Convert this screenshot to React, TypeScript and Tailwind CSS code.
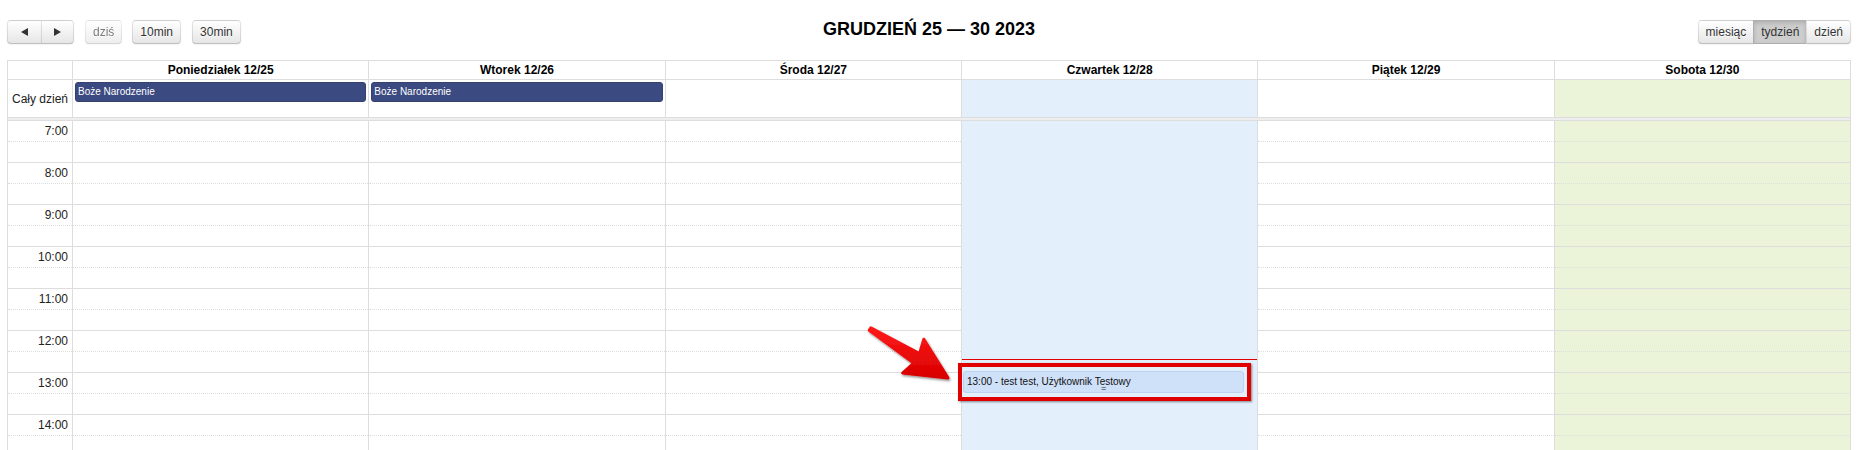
import React from "react";

type Day = { label: string; allDay?: string; today?: boolean; weekend?: boolean };

const DAYS: Day[] = [
  { label: "Poniedziałek 12/25", allDay: "Boże Narodzenie" },
  { label: "Wtorek 12/26", allDay: "Boże Narodzenie" },
  { label: "Środa 12/27" },
  { label: "Czwartek 12/28", today: true },
  { label: "Piątek 12/29" },
  { label: "Sobota 12/30", weekend: true },
];

const HOURS = [7, 8, 9, 10, 11, 12, 13, 14];

const btn =
  "h-[24px] px-[7px] text-[12px] text-[#333] bg-linear-to-b from-white to-[#e6e6e6] border border-[rgba(0,0,0,0.1)] border-b-[rgba(0,0,0,0.25)] shadow-[inset_0_1px_0_rgba(255,255,255,0.2),0_1px_2px_rgba(0,0,0,0.05)] [text-shadow:0_1px_1px_rgba(255,255,255,0.75)]";

function Triangle({ dir }: { dir: "left" | "right" }) {
  return (
    <svg width="7" height="8" viewBox="0 0 7 8" className="block">
      {dir === "left" ? <polygon points="7,0 7,8 0,4" fill="#333" /> : <polygon points="0,0 0,8 7,4" fill="#333" />}
    </svg>
  );
}

function Toolbar() {
  return (
    <div className="grid grid-cols-[1fr_auto_1fr] h-[24px] mb-[16px]">
      <div className="flex items-start">
        <div className="flex">
          <button className={`${btn} w-[35px] rounded-l-[4px] flex items-center justify-center`}>
            <Triangle dir="left" />
          </button>
          <button className={`${btn} w-[33px] -ml-px rounded-r-[4px] flex items-center justify-center`}>
            <Triangle dir="right" />
          </button>
        </div>
        <button className={`${btn} ml-[11px] rounded-[4px] opacity-[0.65]`}>dziś</button>
        <button className={`${btn} ml-[10px] rounded-[4px]`}>10min</button>
        <button className={`${btn} ml-[11px] rounded-[4px]`}>30min</button>
      </div>
      <h2 className="-mt-[2px] text-[18px] leading-[22px] font-bold text-black self-start">GRUDZIEŃ 25 — 30 2023</h2>
      <div className="flex justify-end items-start">
        <button className={`${btn} rounded-l-[4px]`}>miesiąc</button>
        <button className="h-[24px] px-[7px] -ml-px text-[12px] text-[#333] bg-[#cdcdcd] border border-[rgba(0,0,0,0.15)] shadow-[inset_0_2px_4px_rgba(0,0,0,0.15)]">
          tydzień
        </button>
        <button className={`${btn} -ml-px rounded-r-[4px]`}>dzień</button>
      </div>
    </div>
  );
}

function dayBg(d: Day) {
  if (d.today) return "bg-[#e4effc]";
  if (d.weekend) return "bg-[#ebf3d8]";
  return "bg-white";
}

function Slots({ hidden, labels }: { hidden?: boolean; labels?: boolean }) {
  const solid = hidden ? "border-transparent" : "border-[#dddddd]";
  return (
    <>
      {HOURS.map(h => (
        <div key={h}>
          <div className={`h-[21px] border-b border-dotted ${solid} ${labels ? "flex items-center justify-end pr-[4px] text-[12px] text-[#222]" : ""}`}>
            {labels ? `${h}:00` : null}
          </div>
          <div className={`h-[21px] border-b ${solid}`} />
        </div>
      ))}
    </>
  );
}

function Calendar() {
  return (
    <div className="w-[1844px] border border-[#dddddd]">
      <div className="grid grid-cols-[64px_repeat(6,minmax(0,1fr))] h-[18px]">
        <div />
        {DAYS.map(d => (
          <div key={d.label} className="border-l border-[#dddddd] flex items-center justify-center text-[12px] font-bold text-black">
            {d.label}
          </div>
        ))}
      </div>
      <div className="grid grid-cols-[64px_repeat(6,minmax(0,1fr))] h-[38px] border-t border-[#dddddd]">
        <div className="flex items-center justify-end pr-[4px] text-[12px] text-[#222]">Cały dzień</div>
        {DAYS.map(d => (
          <div key={d.label} className={`border-l border-[#dddddd] ${dayBg(d)} pt-[2px] px-[2px]`}>
            {d.allDay && (
              <div className="h-[20px] rounded-[3px] bg-[#3b4a80] border border-[#34416f] text-white text-[10px] leading-[18px] pl-[2px]">
                {d.allDay}
              </div>
            )}
          </div>
        ))}
      </div>
      <div className="border-t border-b border-[#dddddd] h-[4px] bg-[#eeeeee]" />
      <div className="grid grid-cols-[64px_repeat(6,minmax(0,1fr))]">
        <div>
          <Slots labels />
        </div>
        {DAYS.map(d => (
          <div key={d.label} className={`border-l border-[#dddddd] ${dayBg(d)} relative`}>
            <Slots hidden={d.today} />
            {d.today && (
              <>
                <div className="absolute left-0 right-0 top-[238px] h-px bg-[#e00000]" />
                <div className="absolute left-[1px] right-[13px] top-[250px] h-[22px] rounded-[3px] bg-[#cfe0f9] border border-[#bcd2f1] text-[10px] leading-[20px] text-[#111] pl-[3px]">
                  13:00 - test test, Użytkownik Testowy
                  <span className="absolute left-1/2 -translate-x-1/2 bottom-[-1px] text-[9px] leading-[8px] font-['Liberation_Mono',monospace] text-[#222]">=</span>
                </div>
              </>
            )}
          </div>
        ))}
      </div>
    </div>
  );
}

function Arrow() {
  return (
    <svg className="absolute left-[860px] top-[320px]" width="100" height="70" viewBox="0 0 100 70">
      <defs>
        <filter id="sh" x="-20%" y="-20%" width="140%" height="140%">
          <feDropShadow dx="1" dy="1.5" stdDeviation="0.8" floodColor="#000" floodOpacity="0.45" />
        </filter>
        <linearGradient id="rg" x1="0" y1="0" x2="0" y2="1">
          <stop offset="0" stopColor="#ff1a1a" />
          <stop offset="1" stopColor="#d80000" />
        </linearGradient>
      </defs>
      <polygon
        points="10.8,7.7 59.5,33.6 63.8,19.2 87.9,57.9 42.6,53 53.7,43 9.2,10.3"
        fill="url(#rg)"
        stroke="url(#rg)"
        strokeWidth="3"
        strokeLinejoin="round"
        filter="url(#sh)"
      />
    </svg>
  );
}

export default function App() {
  return (
    <div className="relative w-[1863px] h-[450px] overflow-hidden bg-white font-['Liberation_Sans',Arial,sans-serif]">
      <div className="pl-[7px] pt-[20px] w-[1851px]">
        <Toolbar />
        <Calendar />
      </div>
      <Arrow />
      <div className="absolute left-[958px] top-[363px] w-[293px] h-[38px] border-[4px] border-[#e00000] shadow-[1px_1px_2px_rgba(0,0,0,0.45)]" />
    </div>
  );
}
